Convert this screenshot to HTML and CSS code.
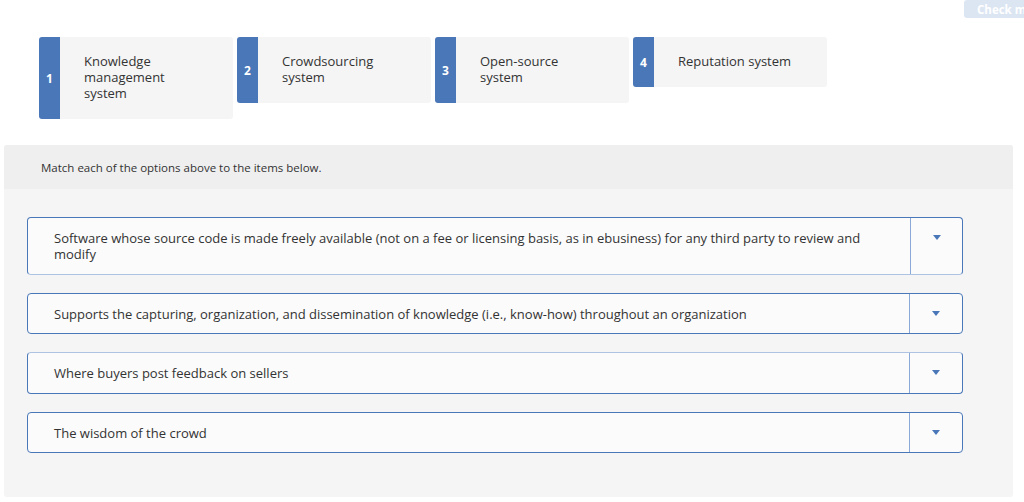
FILE: index.html
```html
<!DOCTYPE html>
<html>
<head>
<meta charset="utf-8">
<link rel="stylesheet" href="styles.css">
</head>
<body>
<div class="topbar"><button class="check">Check my work</button></div>
<div class="cards">
  <div class="card"><div class="num">1</div><div class="label">Knowledge<br>management<br>system</div></div>
  <div class="card"><div class="num">2</div><div class="label">Crowdsourcing<br>system</div></div>
  <div class="card"><div class="num">3</div><div class="label">Open-source<br>system</div></div>
  <div class="card"><div class="num">4</div><div class="label">Reputation system</div></div>
</div>
<div class="panel">
  <div class="panel-head">Match each of the options above to the items below.</div>
  <div class="panel-body">
    <div class="row r1"><div class="text">Software whose source code is made freely available (not on a fee or licensing basis, as in ebusiness) for any third party to review and modify</div><div class="drop"><span class="caret"></span></div></div>
    <div class="row r2"><div class="text">Supports the capturing, organization, and dissemination of knowledge (i.e., know-how) throughout an organization</div><div class="drop"><span class="caret"></span></div></div>
    <div class="row r3"><div class="text">Where buyers post feedback on sellers</div><div class="drop"><span class="caret"></span></div></div>
    <div class="row r4"><div class="text">The wisdom of the crowd</div><div class="drop"><span class="caret"></span></div></div>
  </div>
</div>
</body>
</html>
```
FILE: styles.css
```css
html, body { margin: 0; padding: 0; background: #fff; }
body { font-family: "Open Sans", Lato, sans-serif; color: #333; width: 1024px; height: 502px; overflow: hidden; }
.topbar { height: 18px; display: flex; justify-content: flex-end; }
.check { width: 60px; height: 18px; border: 0; border-radius: 3px 0 0 3px; background: #dce6f3; color: #fff; font-family: "Open Sans", sans-serif; font-weight: 700; font-size: 11.5px; padding: 0 0 0 13px; text-align: left; white-space: nowrap; overflow: hidden; line-height: 9px; }
.cards { display: flex; align-items: flex-start; gap: 4px; margin-top: 19px; padding-left: 39px; }
.card { width: 194px; display: flex; background: #f5f5f5; border-radius: 3px; overflow: hidden; }
.num { width: 21px; flex: none; background: #4a77b8; color: #fff; font-weight: 700; font-size: 12px; display: flex; align-items: center; justify-content: center; }
.label { padding: 16px 10px 18px 24px; font-size: 13px; line-height: 16px; color: #333; }
.panel { margin: 26px 0 0 4px; width: 1009px; height: 352px; background: #f5f5f5; border-radius: 3px; }
.panel-head { height: 44px; background: #efefef; font-size: 11.5px; padding-left: 37px; display: flex; align-items: center; border-radius: 3px 3px 0 0; }
.panel-body { padding: 28px 50px 0 23px; display: flex; flex-direction: column; gap: 18px; }
.row { display: flex; background: #fbfbfb; border: 1px solid #4a77b8; border-radius: 4px; }
.r1 { border-bottom-color: #aec3e2; }
.r3 { border-color: #aec3e2 #4a77b8 #4a77b8 #4a77b8; }
.text { flex: 1; padding: 12px 20px 11.5px 26px; font-size: 13px; line-height: 16px; }
.drop { width: 52px; flex: none; border-left: 1px solid #8aa9d6; display: flex; align-items: center; justify-content: center; }
.r1 .drop { align-items: flex-start; padding-top: 17px; box-sizing: border-box; }
.caret { width: 0; height: 0; border-left: 4.5px solid transparent; border-right: 4.5px solid transparent; border-top: 5px solid #4a77b8; }
```
